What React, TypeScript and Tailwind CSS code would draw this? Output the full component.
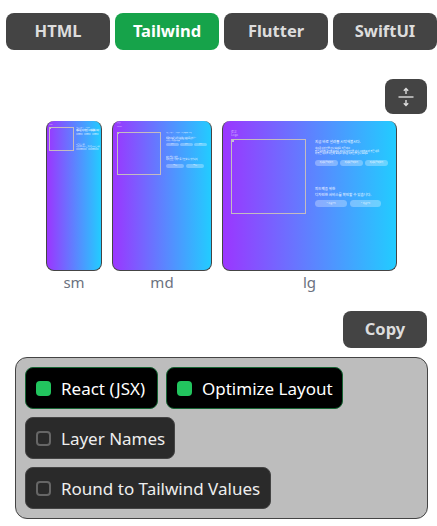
const tabs = ['HTML', 'Tailwind', 'Flutter', 'SwiftUI']

function Tab({ label }: { label: string }) {
  const active = label === 'Tailwind'
  return (
    <button
      className={`h-[37px] w-[104px] rounded-lg text-[16.5px] font-bold ${
        active ? 'bg-[#16a34a] text-white' : 'bg-[#444444] text-[#dddddd]'
      }`}
    >
      {label}
    </button>
  )
}

function Option({ label, checked, width }: { label: string; checked?: boolean; width: string }) {
  return (
    <div
      className={`flex h-[42px] items-center rounded-lg border pl-[10px] text-[17px] ${width} ${
        checked ? 'border-[#166534] bg-black text-white' : 'border-[#444444] bg-[#2a2a2a] text-[#eeeeee]'
      }`}
    >
      {checked ? (
        <span className="h-[15px] w-[15px] rounded bg-[#22c55e]" />
      ) : (
        <span className="h-[15px] w-[15px] rounded border-2 border-[#666666]" />
      )}
      <span className="ml-[10px] pt-[1px]">{label}</span>
    </div>
  )
}

function MiniChip({ text, className }: { text: string; className: string }) {
  return (
    <span className={`flex items-center justify-center overflow-hidden whitespace-nowrap rounded-full bg-white/30 text-white ${className}`}>
      {text}
    </span>
  )
}

function Placeholder({ className, dot }: { className: string; dot: string }) {
  return (
    <div className={`shrink-0 border border-[#c4bcc0] ${className}`}>
      <div className={`bg-[#d8f0d0]/70 ${dot}`} />
    </div>
  )
}

function SmPreview() {
  return (
    <div className="h-[150px] w-[56px] overflow-hidden rounded-lg border-x border-b border-[#444444] bg-[linear-gradient(to_right,#9b36ff,#22ccff)] pl-[2px] pt-[2px] text-left">
      <div className="h-[4px] text-[1.5px] leading-[2px] text-white/60">Logo</div>
      <div className="flex gap-[2px]">
        <Placeholder className="h-[24px] w-[25px]" dot="h-[1px] w-[1px]" />
        <div className="w-[25px] overflow-hidden text-[2px] leading-[2px] text-white">
          <p className="whitespace-nowrap">지금 바로 알려줄</p>
          <p className="mt-[1px] whitespace-nowrap font-bold">새로운 디자인 시작해봅시다</p>
          <div className="mt-[1px] flex gap-[1px]">
            <MiniChip text="버튼" className="h-[2px] w-[7px] text-[1px]" />
            <MiniChip text="버튼" className="h-[2px] w-[7px] text-[1px]" />
            <MiniChip text="버튼" className="h-[2px] w-[7px] text-[1px]" />
          </div>
          <p className="mt-[8px] whitespace-nowrap text-[1.5px]">피드백을 위한</p>
          <p className="whitespace-nowrap text-[1.5px]">디자인한 서비스를 확인할 수 있습니다</p>
          <div className="mt-[1px] flex gap-[1px]">
            <MiniChip text="버튼" className="h-[2px] w-[11px] text-[1px]" />
            <MiniChip text="버튼" className="h-[2px] w-[11px] text-[1px]" />
          </div>
        </div>
      </div>
    </div>
  )
}

function MdPreview() {
  return (
    <div className="h-[150px] w-[100px] overflow-hidden rounded-lg border-x border-b border-[#444444] bg-[linear-gradient(to_right,#9b36ff,#22ccff)] pl-[4px] pt-[2px] text-left">
      <div className="h-[9px] text-[2px] leading-[2.5px] text-white/60">
        <p>로고</p>
        <p>Logo</p>
      </div>
      <div className="flex gap-[5px]">
        <Placeholder className="h-[43px] w-[44px]" dot="h-[1px] w-[1px]" />
        <div className="w-[45px] overflow-hidden text-[2px] leading-[2.5px] text-white">
          <p className="whitespace-nowrap">지금 바로 알려줄 시작해봅시다</p>
          <p className="mt-[2px] whitespace-nowrap text-[1.5px] leading-[1.7px]">새로운 디자인을 만나 보세요 지금 바로 시작하고</p>
          <p className="whitespace-nowrap text-[1.5px] leading-[1.7px]">더 많은 내용을 확인해 보세요 새로운 디자인</p>
          <p className="whitespace-nowrap text-[1.5px] leading-[1.7px]">시작하고 더 많은 내용</p>
          <div className="mt-[1px] flex gap-[1px]">
            <MiniChip text="자세히" className="h-[3px] w-[13px] text-[1px]" />
            <MiniChip text="자세히" className="h-[3px] w-[13px] text-[1px]" />
            <MiniChip text="자세히" className="h-[3px] w-[13px] text-[1px]" />
          </div>
          <p className="mt-[11px] whitespace-nowrap">피드백을 위한</p>
          <p className="whitespace-nowrap">디자인한 서비스를 확인할 수 있습니다</p>
          <div className="mt-[2px] flex gap-[2px]">
            <MiniChip text="다운로드" className="h-[4px] w-[18px] text-[1px]" />
            <MiniChip text="다운로드" className="h-[4px] w-[18px] text-[1px]" />
          </div>
        </div>
      </div>
    </div>
  )
}

function LgPreview() {
  return (
    <div className="h-[150px] w-[175px] overflow-hidden rounded-lg border-x border-b border-[#444444] bg-[linear-gradient(to_right,#9b36ff,#22ccff)] pl-[8px] pt-[10px] text-left">
      <div className="h-[8px] text-[3px] leading-[3px] text-white/60">
        <p>로고</p>
        <p>Logo</p>
      </div>
      <div className="flex gap-[9px]">
        <Placeholder className="h-[75px] w-[75px]" dot="h-[2px] w-[2px]" />
        <div className="w-[76px] overflow-hidden text-[3.5px] leading-[5px] text-white">
          <p className="whitespace-nowrap">지금 바로 알려줄 시작해봅시다.</p>
          <p className="mt-[4px] whitespace-nowrap text-[2.2px] leading-[2.5px]">새로운 디자인을 만나 보세요 지금 바로</p>
          <p className="whitespace-nowrap text-[2.2px] leading-[2.5px]">많은 내용을 확인해 보세요 새로운 디자인을 만나 시작하고 더 많은 내용</p>
          <p className="whitespace-nowrap text-[2.2px] leading-[2.5px]">더 많은 내용을 확인해 보세요 새로운 디자인을 만나 보세요</p>
          <div className="mt-[4px] flex gap-[2px]">
            <MiniChip text="자세히 알아보기" className="h-[6px] w-[23px] text-[2px]" />
            <MiniChip text="자세히 알아보기" className="h-[6px] w-[23px] text-[2px]" />
            <MiniChip text="자세히 알아보기" className="h-[6px] w-[23px] text-[2px]" />
          </div>
          <p className="mt-[20px] whitespace-nowrap">피드백을 위한</p>
          <p className="mt-[1px] whitespace-nowrap">디자인한 서비스를 확인할 수 있습니다.</p>
          <div className="mt-[3px] flex gap-[3px]">
            <MiniChip text="▪ 다운로드" className="h-[7px] w-[32px] text-[2px]" />
            <MiniChip text="▪ 다운로드" className="h-[7px] w-[31px] text-[2px]" />
          </div>
        </div>
      </div>
    </div>
  )
}

export default function App() {
  return (
    <div className="h-[526px] w-[437px] overflow-hidden bg-white font-['Noto_Sans','Noto_Sans_CJK_KR',sans-serif]">
      <div className="flex gap-[5px] pl-[6px] pt-[13px]">
        {tabs.map((t) => (
          <Tab key={t} label={t} />
        ))}
      </div>

      <div className="mr-[10px] mt-[29px] flex justify-end">
        <button className="flex h-[35px] w-[42px] items-center justify-center rounded-lg bg-[#444444] text-[#dddddd]">
          <svg width="16" height="20" viewBox="0 0 16 20" fill="none" stroke="currentColor" strokeWidth="1.4">
            <path d="M0.5 10H15.5" />
            <path d="M8 1.5V7M5.8 3.7L8 1.5L10.2 3.7" />
            <path d="M8 13V18.5M5.8 16.3L8 18.5L10.2 16.3" />
          </svg>
        </button>
      </div>

      {/* Previews */}
      <div className="ml-[46px] mt-[7px] flex gap-[10px] text-[15px] leading-[20px] text-[#6b7280]">
        <div className="text-center">
          <SmPreview />
          <div className="mt-[1px]">sm</div>
        </div>
        <div className="text-center">
          <MdPreview />
          <div className="mt-[1px]">md</div>
        </div>
        <div className="text-center">
          <LgPreview />
          <div className="mt-[1px]">lg</div>
        </div>
      </div>

      <div className="mr-[10px] mt-[19px] flex justify-end">
        <button className="h-[37px] w-[84px] rounded-lg bg-[#444444] text-[16.5px] font-bold text-[#dddddd]">Copy</button>
      </div>

      {/* Options */}
      <div className="ml-[15px] mt-[9px] flex h-[162px] w-[413px] flex-col gap-2 rounded-xl border border-[#444444] bg-[#bdbdbd] pl-[9px] pt-[9px]">
        <div className="flex gap-2">
          <Option label="React (JSX)" checked width="w-[133px]" />
          <Option label="Optimize Layout" checked width="w-[177px]" />
        </div>
        <Option label="Layer Names" width="w-[150px]" />
        <Option label="Round to Tailwind Values" width="w-[246px]" />
      </div>
    </div>
  )
}
